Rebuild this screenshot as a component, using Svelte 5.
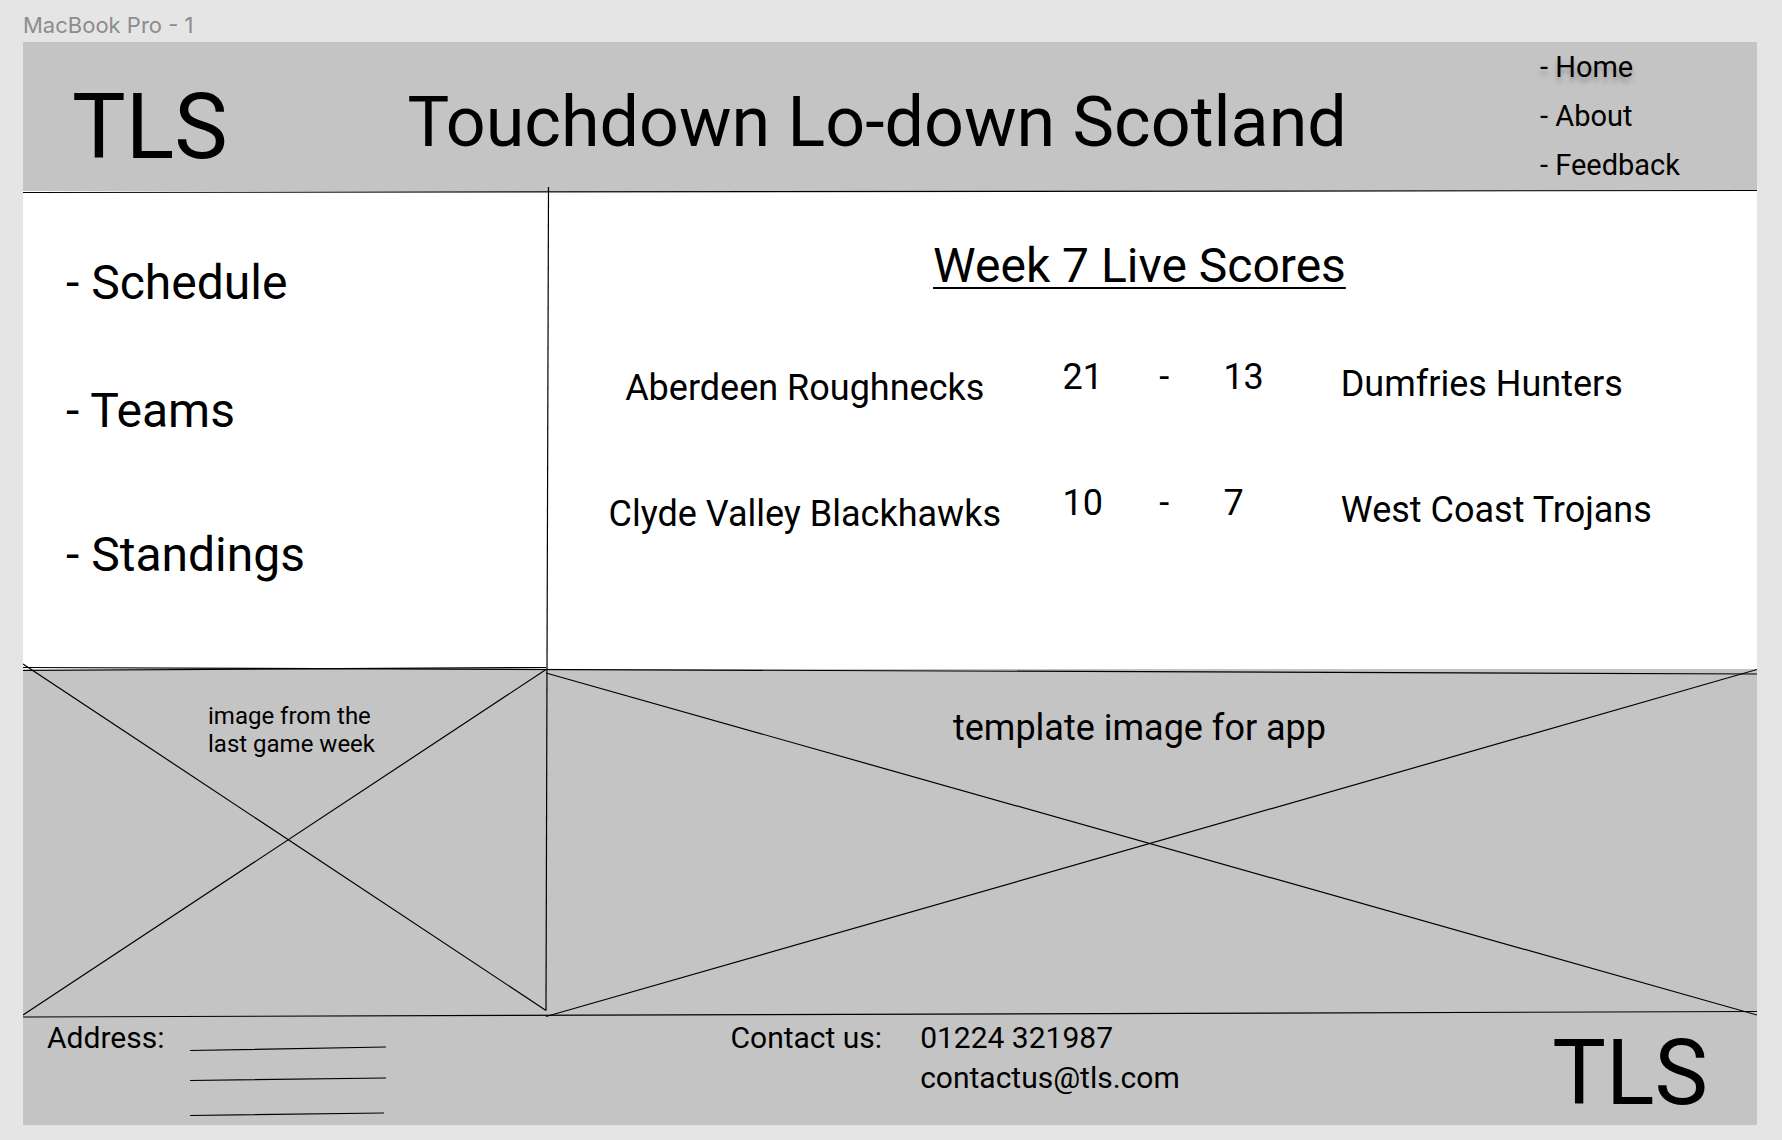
<script>
  const pages = ['Home', 'About', 'Feedback'];
  const sections = ['Schedule', 'Teams', 'Standings'];
  const games = [
    { home: 'Aberdeen Roughnecks', homeScore: 21, awayScore: 13, away: 'Dumfries Hunters' },
    { home: 'Clyde Valley Blackhawks', homeScore: 10, awayScore: 7, away: 'West Coast Trojans' }
  ];

  // Hand-drawn dividers and placeholder crosses, in frame units (1734 x 1083)
  const strokes = [
    [0, 150.5, 1734, 148.5],
    [525.5, 145, 524, 627],
    [524, 627, 523, 968.5],
    [0, 625.5, 1734, 632],
    [0, 628.5, 523, 625.5],
    [0, 622, 523, 968.5],
    [0, 973, 523, 627.5],
    [523, 631, 1734, 973],
    [523, 974.5, 1734, 627.5],
    [0, 975, 1734, 969.5]
  ];
</script>

<div class="canvas">
  <p class="frame-name">MacBook Pro - 1</p>
  <div class="frame">
    <header class="header">
      <div class="logo">TLS</div>
      <h1>Touchdown Lo-down Scotland</h1>
      <nav aria-label="Site">
        <ul>
          {#each pages as page, i}
            <li><a href="#{page.toLowerCase()}" class:current={i === 0}>- {page}</a></li>
          {/each}
        </ul>
      </nav>
    </header>

    <div class="split">
      <nav class="sections" aria-label="League">
        <ul>
          {#each sections as section}
            <li><a href="#{section.toLowerCase()}">- {section}</a></li>
          {/each}
        </ul>
      </nav>
      <main class="scores">
        <h2>Week 7 Live Scores</h2>
        <table>
          <colgroup>
            <col class="col-home" />
            <col class="col-score" />
            <col class="col-dash" />
            <col class="col-away-score" />
            <col />
          </colgroup>
          <tbody>
            {#each games as game}
              <tr>
                <td class="home">{game.home}</td>
                <td>{game.homeScore}</td>
                <td>-</td>
                <td>{game.awayScore}</td>
                <td class="away">{game.away}</td>
              </tr>
            {/each}
          </tbody>
        </table>
      </main>
    </div>

    <div class="split">
      <div class="placeholder small"><p>image from the<br />last game week</p></div>
      <div class="placeholder large"><p>template image for app</p></div>
    </div>

    <footer class="footer">
      <div class="address">
        <span>Address:</span>
        <svg class="blanks" viewBox="0 0 196 72" aria-hidden="true">
          <path d="M0 5.5 196 2M0 35.5 196 33M0 70.5 194 68" />
        </svg>
      </div>
      <div class="contact">
        <span>Contact us:</span>
        <div class="details">
          <a href="tel:01224321987">01224 321987</a>
          <a href="mailto:contactus@tls.com">contactus@tls.com</a>
        </div>
      </div>
      <div class="logo">TLS</div>
    </footer>

    <svg class="strokes" viewBox="0 0 1734 1083" preserveAspectRatio="none" aria-hidden="true">
      {#each strokes as [x1, y1, x2, y2]}
        <line {x1} {y1} {x2} {y2} />
      {/each}
    </svg>
  </div>
</div>

<style>
  :global(body) {
    margin: 0;
    background: #e5e5e5;
  }

  .canvas {
    box-sizing: border-box;
    display: flex;
    flex-direction: column;
    min-height: 100vh;
    padding: 8px 25px 15px 23px;
    font-family: Roboto, 'Liberation Sans', sans-serif;
    color: #000;
  }

  h1,
  h2,
  p,
  ul {
    margin: 0;
    padding: 0;
    font-weight: 400;
  }

  ul {
    list-style: none;
  }

  a {
    color: inherit;
    text-decoration: none;
  }

  .frame-name {
    font: 22px/34px Inter, sans-serif;
    color: #8c8c8c;
  }

  .frame {
    position: relative;
    flex: 1;
    display: grid;
    grid-template-rows:
      minmax(max-content, 149fr) minmax(max-content, 478fr)
      minmax(max-content, 345fr) minmax(max-content, 111fr);
    background: #c4c4c4;
  }

  .strokes {
    position: absolute;
    inset: 0;
    width: 100%;
    height: 100%;
    pointer-events: none;
  }

  .strokes line {
    stroke: #000;
    stroke-width: 1.2;
    vector-effect: non-scaling-stroke;
  }

  .logo {
    font-size: 90px;
    line-height: 96px;
  }

  .header {
    display: grid;
    grid-template-columns: 335fr 1131fr auto;
    align-items: start;
    padding: 0 77px 0 49px;
  }

  .header .logo,
  h1 {
    margin-top: 38px;
  }

  h1 {
    font-size: 70px;
    line-height: 84px;
    white-space: nowrap;
  }

  .header nav {
    padding-top: 1px;
    font-size: 29px;
    line-height: 49px;
  }

  .current {
    text-shadow: 0 5px 5px rgba(0, 0, 0, 0.25);
  }

  .split {
    display: grid;
    grid-template-columns: 524fr 1210fr;
  }

  .sections,
  .scores {
    background: #fff;
  }

  .sections {
    padding: 64px 43px 0;
    font-size: 48px;
    line-height: 56px;
  }

  .sections ul {
    display: flex;
    flex-direction: column;
    gap: 72px;
  }

  .sections li:last-child {
    margin-top: 16px;
  }

  .scores {
    padding-top: 47px;
  }

  h2 {
    padding-right: 25px;
    font-size: 48px;
    line-height: 56px;
    text-align: center;
    text-decoration: underline;
    text-decoration-thickness: 2px;
    text-underline-offset: 5px;
  }

  table {
    width: 100%;
    margin-top: 61px;
    table-layout: fixed;
    border-collapse: collapse;
    font-size: 36px;
    line-height: 44px;
    white-space: nowrap;
  }

  .col-home {
    width: 42.6%;
  }

  .col-score {
    width: 8%;
  }

  .col-dash {
    width: 5.3%;
  }

  .col-away-score {
    width: 9.7%;
  }

  tr {
    height: 126px;
  }

  td {
    padding: 0;
    vertical-align: top;
  }

  .home {
    padding-top: 11px;
    text-align: center;
  }

  .away {
    padding-top: 7px;
  }

  .placeholder {
    display: flex;
    justify-content: center;
  }

  .small {
    padding: 33px 0 0 13px;
    font-size: 24px;
    line-height: 28px;
  }

  .large {
    padding: 37px 25px 0 0;
    font-size: 36px;
    line-height: 44px;
  }

  .footer {
    display: grid;
    grid-template-columns: 682fr 820fr auto;
    align-items: start;
    padding: 4px 49px 0 24px;
    font-size: 30px;
    line-height: 40px;
  }

  .footer .logo {
    margin-top: 8px;
  }

  .address,
  .contact {
    display: flex;
  }

  .address {
    gap: 26px;
  }

  .contact {
    gap: 38px;
  }

  .details {
    display: flex;
    flex-direction: column;
  }

  .blanks {
    width: 196px;
    height: 72px;
    margin-top: 27px;
    fill: none;
    stroke: #000;
    stroke-width: 1.2;
  }
</style>
